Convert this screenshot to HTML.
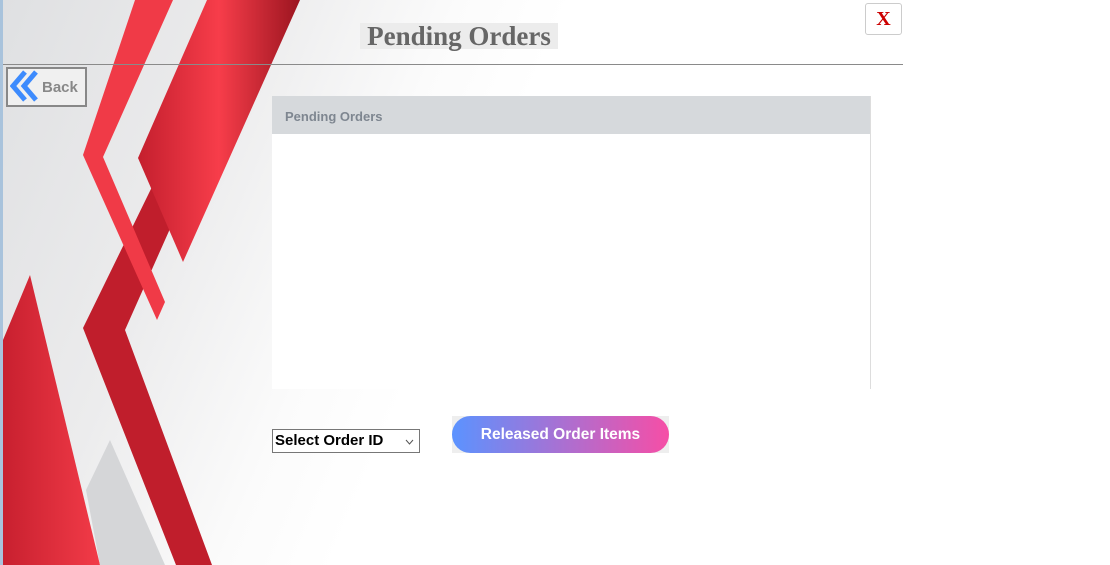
<!DOCTYPE html>
<html><head><meta charset="utf-8"><style>
*{margin:0;padding:0;box-sizing:border-box}
body{width:1110px;height:565px;overflow:hidden;background:#fff;position:relative;font-family:"Liberation Sans",sans-serif}
.abs{position:absolute}
</style></head><body>
<svg class="abs" style="left:0;top:0" width="1110" height="565">
<defs>
<linearGradient id="bg" x1="0" y1="0" x2="1" y2="0.35">
<stop offset="0" stop-color="#dfe0e2"/><stop offset="0.35" stop-color="#ececed"/><stop offset="0.6" stop-color="#fbfbfb"/><stop offset="0.75" stop-color="#fff"/>
</linearGradient>
<linearGradient id="rb" x1="0" y1="0" x2="1" y2="0">
<stop offset="0" stop-color="#c41f2e"/><stop offset="0.5" stop-color="#f73d4a"/><stop offset="1" stop-color="#9b1520"/>
</linearGradient>
<linearGradient id="rd" x1="0" y1="0" x2="1" y2="0">
<stop offset="0" stop-color="#c8202f"/><stop offset="1" stop-color="#f23b48"/>
</linearGradient>
</defs>
<rect x="0" y="0" width="680" height="565" fill="url(#bg)"/>
<polygon points="3,340 30,275 100,565 3,565" fill="url(#rd)"/>
<polygon points="86,490 110,440 165,565 100,565" fill="#d5d6d8"/>
<polygon points="170,150 205,150 125,330 212,565 176,565 83,328" fill="#c01e2c"/>
<polygon points="135,0 173,0 103,157 165,302 157,320 83,155" fill="#f03a47"/>
<polygon points="207,0 300,0 183,262 138,158" fill="url(#rb)"/>
<rect x="0" y="0" width="3" height="565" fill="#a9c3dc"/>
</svg>
<div class="abs" style="left:360px;top:23px;width:198px;height:26px;background:#ececec;color:#666;font:bold 27px 'Liberation Serif',serif;text-align:center;line-height:27px">Pending Orders</div>
<div class="abs" style="left:865px;top:3px;width:37px;height:32px;background:#fff;border:1px solid #ccc;border-radius:3px;color:#c00;font:bold 20px 'Liberation Serif',serif;text-align:center;line-height:30px">X</div>
<div class="abs" style="left:3px;top:64px;width:900px;height:1px;background:#8a8a8a"></div>
<div class="abs" style="left:6px;top:67px;width:81px;height:40px;border:2px solid #888;background:#f0f0f0">
<svg class="abs" style="left:2px;top:1px" width="30" height="34"><polyline points="15,2 3,16 15,30" fill="none" stroke="#3d8bfd" stroke-width="5"/><polyline points="26,2 14,16 26,30" fill="none" stroke="#3d8bfd" stroke-width="5"/></svg>
<span class="abs" style="left:34px;top:10px;font:bold 15px 'Liberation Sans',sans-serif;color:#888">Back</span>
</div>
<div class="abs" style="left:272px;top:96px;width:599px;height:293px;background:#fff;border-right:1px solid #ddd">
<div style="height:38px;background:#d6d9dc;color:#7e8690;font:bold 13px 'Liberation Sans',sans-serif;padding:13px 0 0 13px">Pending Orders</div>
</div>
<div class="abs" style="left:272px;top:429px;width:148px;height:24px;background:#fff;border:1px solid #777;font:bold 15px 'Liberation Sans',sans-serif;color:#000;padding:2px 0 0 2px">Select Order ID
<svg class="abs" style="right:5px;top:9px" width="9" height="6"><polyline points="1,1 4.5,5 8,1" fill="none" stroke="#555" stroke-width="1"/></svg></div>
<div class="abs" style="left:452px;top:416px;width:217px;height:37px;background:#eee"></div>
<div class="abs" style="left:452px;top:416px;width:217px;height:37px;border-radius:19px;background:linear-gradient(90deg,#5b93ff,#f64ea6);color:#fff;font:bold 15.5px 'Liberation Sans',sans-serif;text-align:center;line-height:38px">Released Order Items</div>
</body></html>
